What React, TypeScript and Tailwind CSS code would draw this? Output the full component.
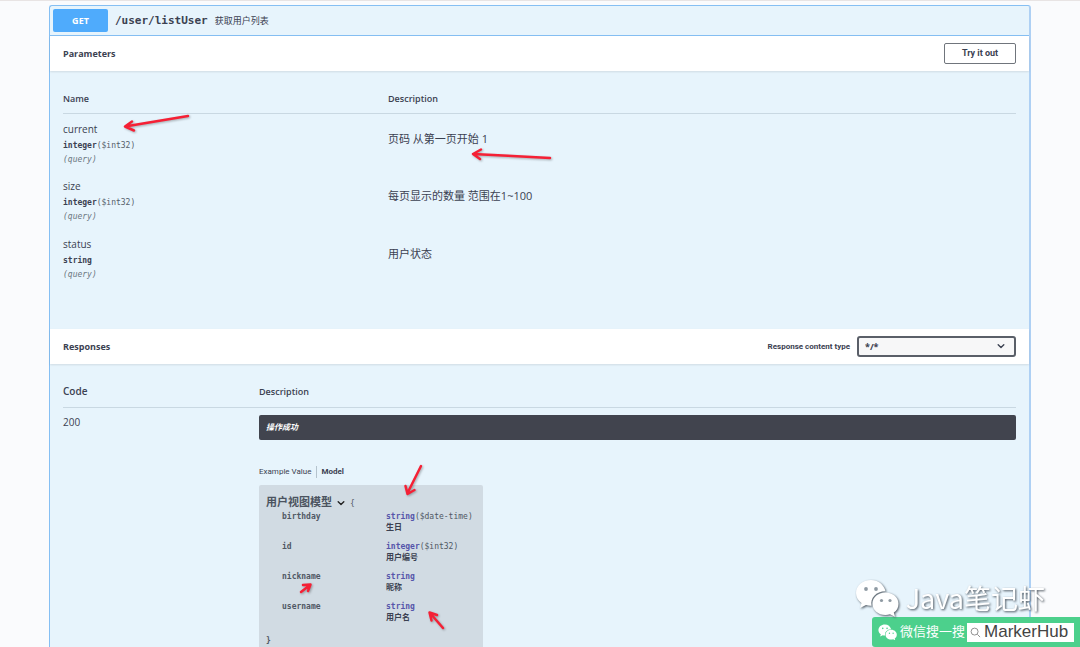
import type { ReactNode } from 'react';

interface Param {
  name: string;
  type: string;
  format?: string;
  description: string;
}

interface Property {
  name: string;
  type: string;
  format?: string;
  title: string;
}

const PARAMS: Param[] = [
  { name: 'current', type: 'integer', format: '($int32)', description: '页码 从第一页开始 1' },
  { name: 'size', type: 'integer', format: '($int32)', description: '每页显示的数量 范围在1~100' },
  { name: 'status', type: 'string', description: '用户状态' },
];

const PROPERTIES: Property[] = [
  { name: 'birthday', type: 'string', format: '($date-time)', title: '生日' },
  { name: 'id', type: 'integer', format: '($int32)', title: '用户编号' },
  { name: 'nickname', type: 'string', title: '昵称' },
  { name: 'username', type: 'string', title: '用户名' },
];

// shaft + barbs
const ARROWS = [
  'M188 116 L125 126.500 M132 121.500 L125 126.500 L134 130.500',
  'M550 158 L473 154 M481 149.500 L473 154 L480 159',
  'M421 466 L407.500 493 M405.500 486 L407.500 494 L414.500 490',
  'M301 592 L310 585 M303 585 L310.500 584.500 L308 591',
  'M443 628 L430 613 M431.500 620.500 L429.500 612.500 L437 615',
];

const MONO = "font-['DejaVu_Sans_Mono','Noto_Sans_CJK_SC',monospace]";

function SectionHeader({ title, children }: { title: string; children: ReactNode }) {
  return (
    <div className="relative flex h-[35px] items-center justify-between bg-white pr-[13px] pl-[13px] shadow-[0_1px_2px_rgba(0,0,0,0.1)]">
      <h4 className="text-[9px] font-bold">{title}</h4>
      {children}
    </div>
  );
}

function Chevron({ className }: { className: string }) {
  return (
    <svg viewBox="0 0 10 6" fill="none" stroke="currentColor" strokeWidth="1.7" className={className} aria-hidden="true">
      <path d="M1.5 1 L5 4.5 L8.5 1" strokeLinecap="round" strokeLinejoin="round" />
    </svg>
  );
}

function WechatIcon({ className, eye }: { className: string; eye: string }) {
  return (
    <svg viewBox="0 0 44 38" className={className} aria-hidden="true">
      <path
        fill="#fff"
        d="M16 1C7.500 1 1 6.700 1 14c0 4.200 2.200 7.700 5.500 10L5 29l6-3c1.800.5 3.500.8 5.500.7C15 19 21 12.500 30.500 12.300 29 5.500 23 1 16 1Z"
      />
      <path
        fill="#fff"
        d="M30.500 13.500C23 13.500 17.500 18.500 17.500 24.700S23 36 30.500 36c1.500 0 3-.2 4.500-.7l5 2.500-1.200-4.200c2.900-2 4.700-5 4.700-8.900 0-6.200-5.500-11.200-13-11.200Z"
      />
      <g fill={eye}>
        <circle cx="11" cy="10" r="1.900" />
        <circle cx="21" cy="10" r="1.900" />
        <circle cx="26.500" cy="21.500" r="1.600" />
        <circle cx="35" cy="21.500" r="1.600" />
      </g>
    </svg>
  );
}

function ParamTable() {
  return (
    <table className="w-full table-fixed text-left">
      <thead>
        <tr className="h-[29px] border-b border-[#c9d8e2] text-[9px]">
          <th className="w-[325px] font-semibold">Name</th>
          <th className="font-semibold">Description</th>
        </tr>
      </thead>
      <tbody>
        {PARAMS.map((p) => (
          <tr key={p.name} className="h-[58px] align-top">
            <td className="pt-[7px]">
              <div className="text-[10px] leading-4">{p.name}</div>
              <div className={`${MONO} mt-[2px] text-[8px] leading-[14px]`}>
                <b>{p.type}</b>
                <span className="text-[#55606b]">{p.format}</span>
              </div>
              <div className={`${MONO} text-[8px] leading-[14px] text-[#6b7680] italic`}>(query)</div>
            </td>
            <td className="pt-[17px] text-[11px] leading-4">{p.description}</td>
          </tr>
        ))}
      </tbody>
    </table>
  );
}

function ModelBox() {
  return (
    <div className={`${MONO} mt-[7px] w-[224px] rounded-[2px] bg-[#d1dbe3] px-[7px] pt-[10px] pb-1 text-[8px] text-[#505864]`}>
      <button type="button" className="flex h-4 items-center">
        <span className="font-['Open_Sans','Noto_Sans_CJK_SC',sans-serif] text-[11px] font-semibold text-[#4b535f]">用户视图模型</span>
        <Chevron className="mx-[5px] mt-[2px] w-[8px] text-[#222]" />
        <span className="mt-[2px]">{'{'}</span>
      </button>
      <table className="w-full table-fixed text-left leading-[11px]">
        <tbody>
          {PROPERTIES.map((p) => (
            <tr key={p.name} className="align-top">
              <th className="w-[120px] pl-4 font-bold">{p.name}</th>
              <td className="pb-2 whitespace-nowrap">
                <b className="text-[#5555aa]">{p.type}</b>
                {p.format}
                <div className="font-bold text-[#3b4151]">{p.title}</div>
              </td>
            </tr>
          ))}
        </tbody>
      </table>
      <div className="pt-1 leading-[11px] font-bold">{'}'}</div>
    </div>
  );
}

function ResponseTable() {
  return (
    <table className="w-full table-fixed text-left">
      <thead>
        <tr className="h-[30px] border-b border-[#c9d8e2]">
          <th className="w-[196px] text-[10px] font-semibold">Code</th>
          <th className="text-[9px] font-semibold">Description</th>
        </tr>
      </thead>
      <tbody>
        <tr className="align-top">
          <td className="pt-[6px] text-[10px] leading-4">200</td>
          <td className="pt-[7px]">
            <div className="flex h-[25px] items-center rounded-[2px] bg-[#41444e] px-[7px] text-[8px] font-bold text-white italic">操作成功</div>
            <div className="mt-[26px] flex font-['Roboto',sans-serif] text-[8px] leading-3">
              <button type="button" className="border-r border-[#b5c3cd] pr-[5px]">Example Value</button>
              <button type="button" className="pl-1 font-bold">Model</button>
            </div>
            <ModelBox />
          </td>
        </tr>
      </tbody>
    </table>
  );
}

function Watermark() {
  return (
    <div className="absolute right-0 bottom-0 flex w-[225px] flex-col items-end">
      <div className="flex items-center gap-[7px] pr-[35px] drop-shadow-[1px_1px_1px_rgba(60,70,80,0.9)]">
        <WechatIcon className="w-[44px]" eye="#8f9aa3" />
        <span className="font-['Noto_Sans_CJK_SC',sans-serif] text-[27px] leading-9 whitespace-nowrap text-white">Java笔记虾</span>
      </div>
      <div className="flex h-[30px] w-[208px] items-center rounded-l-[3px] bg-[#4cd08c] pl-[6px]">
        <WechatIcon className="w-[19px]" eye="#4cd08c" />
        <span className="ml-[3px] text-[13px] whitespace-nowrap text-white">微信搜一搜</span>
        <div className="ml-[2px] flex h-[19px] w-[107px] items-center bg-white pl-[3px]">
          <svg viewBox="0 0 12 12" fill="none" stroke="#888" className="w-[11px] shrink-0" aria-hidden="true">
            <circle cx="5" cy="5" r="3.800" />
            <path d="M8 8 L11 11" />
          </svg>
          <span className="ml-[3px] font-['Liberation_Sans',sans-serif] text-[17px] text-[#444]">MarkerHub</span>
        </div>
      </div>
    </div>
  );
}

export default function App() {
  return (
    <div className="relative h-screen overflow-hidden border-t border-[#e8e4e4] bg-[#fafbfd] pt-1 font-['Open_Sans','Noto_Sans_CJK_SC',sans-serif] text-[#3b4151]">
      <main className="mr-[49px] ml-[49px] min-h-screen rounded-t-[3px] border border-r-2 border-t-[#85bff3] border-r-[#aed0f4] border-l-[#85bff3] bg-[#e7f4fc]">
        <div className="flex h-[30px] items-center border-b border-[#85bff3] pl-[3px]">
          <span className="flex h-[23px] w-[55px] items-center justify-center rounded-[2px] bg-[#4fabfc] text-[9px] font-bold text-white">GET</span>
          <a href="#listUser" className={`${MONO} ml-[7px] pt-[2px] text-[11px] font-bold`}>/user/listUser</a>
          <span className="ml-[7px] pt-px text-[9px]">获取用户列表</span>
        </div>

        <SectionHeader title="Parameters">
          <button type="button" className="h-[21px] w-[72px] rounded-[2px] border border-[#70757c] font-['Roboto',sans-serif] text-[9px] font-bold">
            Try it out
          </button>
        </SectionHeader>
        <div className="pt-[13px] pr-[13px] pb-[42px] pl-[13px]">
          <ParamTable />
        </div>

        <SectionHeader title="Responses">
          <div className="flex items-center gap-[7px]">
            <label htmlFor="content-type" className="font-['Roboto',sans-serif] text-[8px] font-bold">Response content type</label>
            <div className="relative">
              <select id="content-type" className="block h-[21px] w-[159px] appearance-none rounded-[3px] border-2 border-[#5a5f68] bg-[#f7f7f8] pl-[6px] text-[9px] font-bold">
                <option>*/*</option>
              </select>
              <Chevron className="pointer-events-none absolute top-2 right-[11px] w-[8px]" />
            </div>
          </div>
        </SectionHeader>
        <div className="pt-[13px] pr-[13px] pl-[13px]">
          <ResponseTable />
        </div>
      </main>

      <svg
        viewBox="0 0 1080 647"
        fill="none"
        stroke="#f52035"
        strokeWidth="2.5"
        strokeLinecap="round"
        strokeLinejoin="round"
        className="pointer-events-none absolute -top-px left-0 h-[647px] w-[1080px] drop-shadow-[1px_1px_1px_rgba(0,0,0,0.3)]"
        aria-hidden="true"
      >
        {ARROWS.map((d) => (
          <path key={d} d={d} />
        ))}
      </svg>
      <Watermark />
    </div>
  );
}
